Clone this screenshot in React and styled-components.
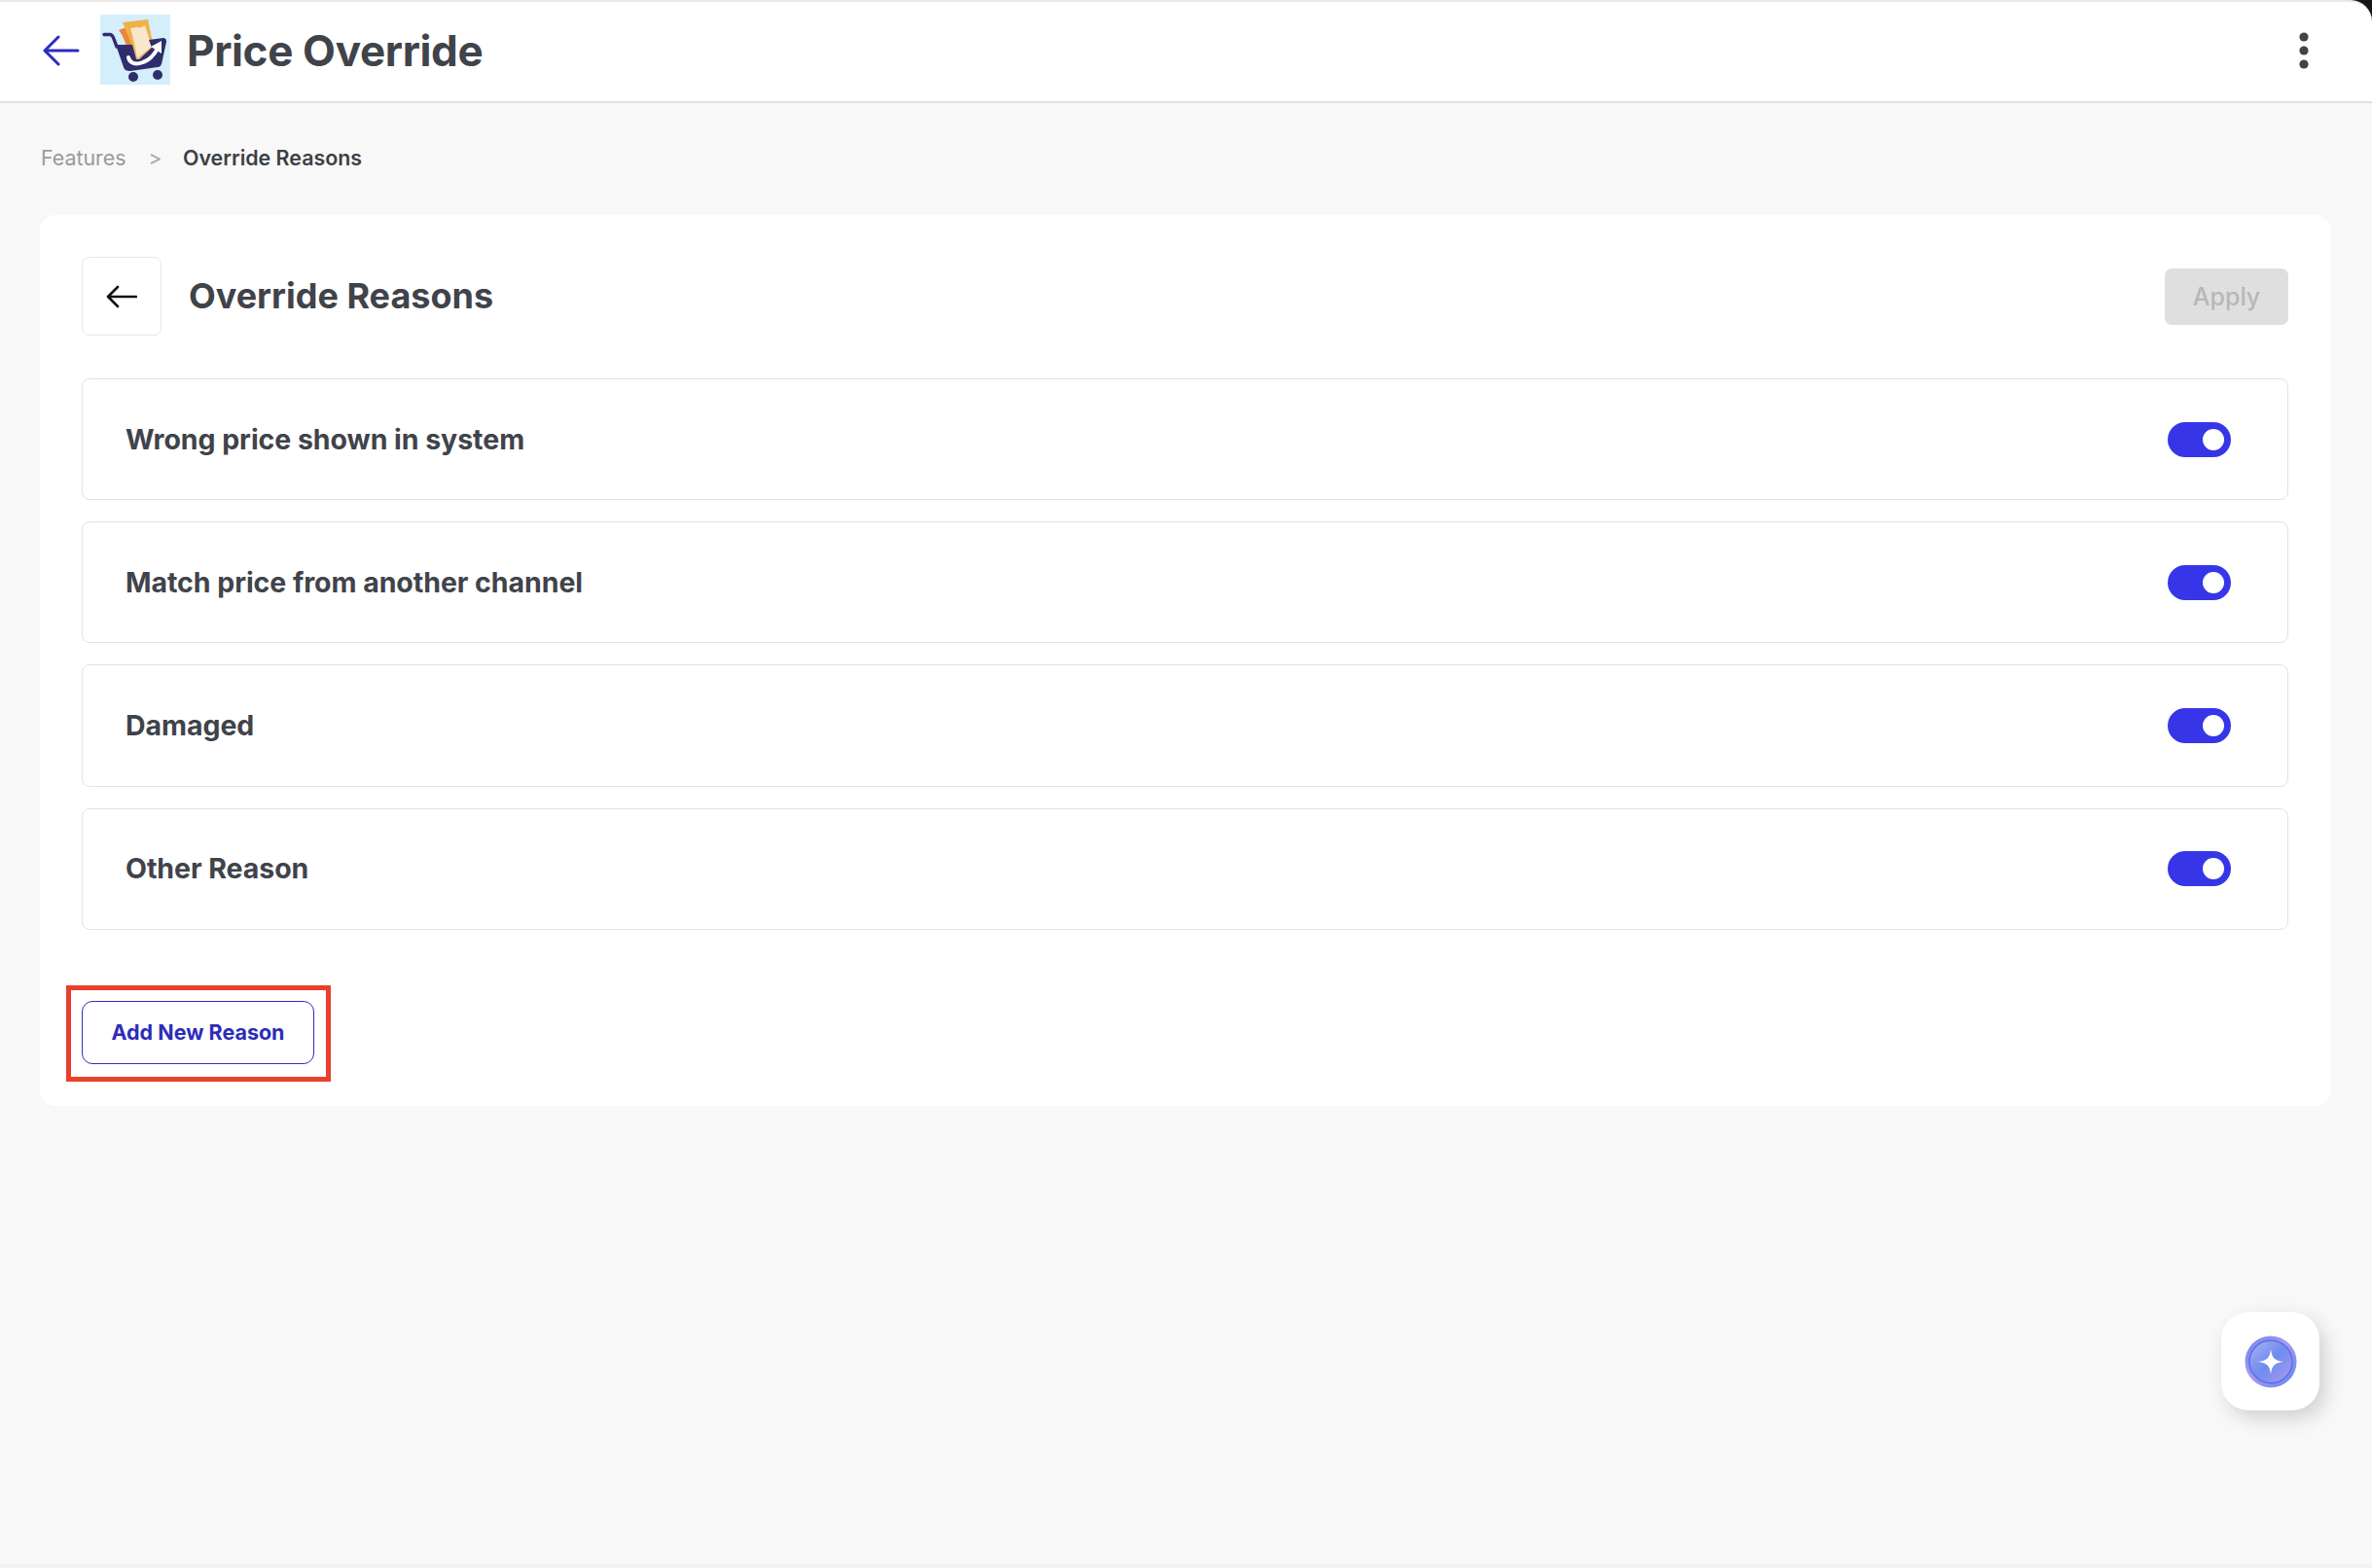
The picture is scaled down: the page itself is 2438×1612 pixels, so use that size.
import React from "react";
import styled, { createGlobalStyle } from "styled-components";

const Global = createGlobalStyle`
  html, body { margin: 0; padding: 0; background: #f8f8f8; overflow: hidden; }
  * { box-sizing: border-box; }
  body { font-family: Inter, "Liberation Sans", sans-serif; }
`;
const Page = styled.div`
  position: relative;
  width: 2438px;
  height: 1612px;
  display: flex;
  flex-direction: column;
  background: #f8f8f8;
  border-bottom: 4px solid #f2f2f2;
`;
const TopBar = styled.div`background: #161616;`;
const Header = styled.header`
  height: 106px;
  display: flex;
  align-items: center;
  background: #fff;
  border-top: 2px solid #e9e9e9;
  border-bottom: 2px solid #e0e0e0;
  border-top-right-radius: 22px;
  padding: 0 0 2px 44px;
`;
const BackIcon = styled.svg`width: 38px; height: 32px; flex: none;`;
const Logo = styled.svg`width: 72px; height: 72px; margin: 0 0 2px 21px; flex: none;`;
const AppTitle = styled.h1`
  margin: 0 0 0 17px;
  font-size: 44px;
  line-height: 54px;
  font-weight: 700;
  letter-spacing: -0.35px;
  color: #40434a;
  flex: 1;
`;
const Dots = styled.svg`width: 10px; height: 38px; margin-right: 65px; flex: none;`;
const Main = styled.main`
  flex: 1;
  padding: 44px 43px 0 41px;
`;
const Crumbs = styled.nav`
  height: 24px;
  display: flex;
  align-items: center;
  font-size: 21.4px;
  padding-left: 1px;
`;
const CrumbLink = styled.span`color: #9a9a9a; font-weight: 400;`;
const CrumbSep = styled.span`color: #a6a6a6; margin: 0 21.5px 0 23px; font-size: 21px;`;
const CrumbCurrent = styled.span`color: #3c3f46; font-weight: 600;`;
const Card = styled.section`
  margin-top: 47px;
  background: #fff;
  border-radius: 16px;
  padding: 43px;
`;
const CardHead = styled.div`
  display: flex;
  align-items: center;
  height: 81px;
`;
const BackButton = styled.button`
  width: 82px;
  height: 81px;
  display: flex;
  align-items: center;
  justify-content: center;
  background: #fff;
  border: 1.5px solid #e6e6e6;
  border-radius: 8px;
  padding: 0;
`;
const BackArrow = styled.svg`width: 32px; height: 24px;`;
const CardTitle = styled.h2`
  margin: 0 0 2px 28px;
  flex: 1;
  font-size: 36px;
  line-height: 44px;
  font-weight: 700;
  color: #40434a;
`;
const ApplyButton = styled.button`
  width: 127px;
  height: 58px;
  background: #dfdfdf;
  color: #b7b7b7;
  border: none;
  border-radius: 7px;
  font: 500 25px Inter, sans-serif;
`;
const Rows = styled.div`
  margin-top: 44px;
  display: flex;
  flex-direction: column;
  gap: 22px;
`;
const Row = styled.div`
  height: 125.2px;
  display: flex;
  align-items: center;
  justify-content: space-between;
  border: 1.5px solid #e2e2e2;
  border-radius: 8px;
  padding: 0 58px 0 44px;
`;
const RowLabel = styled.span`
  font-size: 28.5px;
  font-weight: 650;
  letter-spacing: -0.05px;
  color: #40434a;
  margin-bottom: 1px;
`;
const Toggle = styled.span`
  width: 65px;
  height: 36px;
  border-radius: 18px;
  background: #3636e8;
  display: flex;
  align-items: center;
  justify-content: flex-end;
  padding-right: 7px;
`;
const Knob = styled.span`
  width: 22px;
  height: 22px;
  border-radius: 50%;
  background: #fff;
`;
const AddWrap = styled.div`
  position: relative;
  width: 239px;
  margin-top: 73px;
`;
const AddButton = styled.button`
  width: 239px;
  height: 65px;
  background: #fff;
  border: 1.5px solid #2f2fc4;
  border-radius: 11px;
  color: #2c2cb8;
  font: 700 21.5px Inter, sans-serif;
  padding: 0;
`;
const Highlight = styled.span`
  position: absolute;
  left: -16px;
  top: -16px;
  width: 272px;
  height: 99px;
  border: 5px solid #e8402a;
  pointer-events: none;
`;
const Fab = styled.button`
  position: absolute;
  left: 2283px;
  top: 1349px;
  width: 101px;
  height: 101px;
  border: none;
  border-radius: 28px;
  background: #fff;
  box-shadow: 6px 8px 20px rgba(0, 0, 0, 0.16);
  display: flex;
  align-items: center;
  justify-content: center;
  padding: 0;
`;
const FabIcon = styled.svg`width: 54px; height: 54px;`;

const reasons = [
  "Wrong price shown in system",
  "Match price from another channel",
  "Damaged",
  "Other Reason",
];

export default function App() {
  return (
    <Page>
      <Global />
      <TopBar>
        <Header>
          <BackIcon viewBox="0 0 38 32" fill="none" stroke="#2c2cc0" strokeWidth="3" strokeLinecap="round" strokeLinejoin="round">
            <path d="M2 16H36M16 2L2 16L16 30" />
          </BackIcon>
          <Logo viewBox="0 0 72 72">
            <rect width="72" height="72" fill="#d5eefb" />
            <path d="M19 16L27 13L39 47L32 45C27 32 24 22 19 16Z" fill="#e8873a" />
            <path d="M23 8L49 5L55 34L38 47C33 32 28 20 23 8Z" fill="#f2b04a" />
            <path d="M31 14L38 13C40 14 43 13 46 11L53 33L38 45C36 34 34 24 31 14Z" fill="#f8e6cd" />
            <path d="M16 31L33 31L37 46L40 46L53 34L50 26L65 24C67 24 68 25 68 28L63 51C62 53 61 54 59 54L31 58C27 58 25 57 24 54Z" fill="#2f2d6b" />
            <path d="M4 20.5H10C12 20.5 13 22 14 25L17 33" fill="none" stroke="#2f2d6b" strokeWidth="3.5" strokeLinecap="round" />
            <circle cx="34" cy="64" r="5" fill="#2f2d6b" />
            <circle cx="59" cy="62" r="5" fill="#2f2d6b" />
            <path d="M29 44C30 50 36 52 44 49C50 47 55 42 59 35" fill="none" stroke="#fff" strokeWidth="4" strokeLinecap="round" />
            <path d="M52 33L63 27L63 40Z" fill="#fff" />
          </Logo>
          <AppTitle>Price Override</AppTitle>
          <Dots viewBox="0 0 10 38" fill="#40434a">
            <circle cx="5" cy="5" r="4.6" />
            <circle cx="5" cy="19" r="4.6" />
            <circle cx="5" cy="33" r="4.6" />
          </Dots>
        </Header>
      </TopBar>
      <Main>
        <Crumbs>
          <CrumbLink>Features</CrumbLink>
          <CrumbSep>&gt;</CrumbSep>
          <CrumbCurrent>Override Reasons</CrumbCurrent>
        </Crumbs>
        <Card>
          <CardHead>
            <BackButton aria-label="Back">
              <BackArrow viewBox="0 0 32 24" fill="none" stroke="#111" strokeWidth="2.6" strokeLinecap="round" strokeLinejoin="round">
                <path d="M2 12H31M12 2L2 12L12 22" />
              </BackArrow>
            </BackButton>
            <CardTitle>Override Reasons</CardTitle>
            <ApplyButton>Apply</ApplyButton>
          </CardHead>
          <Rows>
            {reasons.map((r) => (
              <Row key={r}>
                <RowLabel>{r}</RowLabel>
                <Toggle><Knob /></Toggle>
              </Row>
            ))}
          </Rows>
          <AddWrap>
            <AddButton>Add New Reason</AddButton>
            <Highlight />
          </AddWrap>
        </Card>
      </Main>
      <Fab aria-label="Assistant">
        <FabIcon viewBox="0 0 54 54">
          <defs>
            <linearGradient id="ring" x1="0" y1="0" x2="1" y2="1">
              <stop offset="0" stopColor="#6f7df0" />
              <stop offset="0.45" stopColor="#a79cf0" />
              <stop offset="1" stopColor="#5f86ee" />
            </linearGradient>
            <linearGradient id="disc" x1="0" y1="0" x2="1" y2="1">
              <stop offset="0" stopColor="#aab2f4" />
              <stop offset="0.5" stopColor="#6f8cee" />
              <stop offset="1" stopColor="#b09aee" />
            </linearGradient>
          </defs>
          <circle cx="27" cy="27" r="26.5" fill="url(#ring)" />
          <circle cx="27" cy="27" r="22" fill="url(#disc)" stroke="#5c6ee6" strokeWidth="1.5" />
          <path d="M27 14C28 23 31 26 40 27C31 28 28 31 27 40C26 31 23 28 14 27C23 26 26 23 27 14Z" fill="#fff" />
        </FabIcon>
      </Fab>
    </Page>
  );
}
